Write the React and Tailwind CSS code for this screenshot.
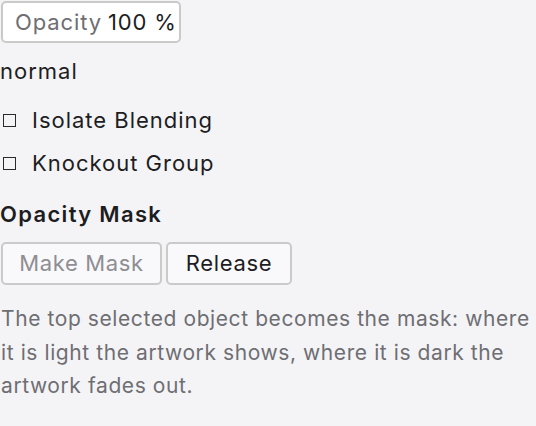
export default function App() {
  return (
    <div className="min-h-[426px] bg-[#f4f4f6] text-[#1d1d1f] font-['Inter','Noto_Sans',sans-serif] text-[22px] tracking-[0.045em]">
      <div className="flex flex-col items-start">
        {/* opacity field */}
        <div className="mt-px ml-px flex h-[42px] w-[180px] items-center whitespace-nowrap rounded-[5px] border-2 border-[#cacaca] bg-white pl-[12px] tracking-[0.04em]">
          <span className="text-[#6e6e73]">Opacity</span>
          <span className="ml-[6px]">100 %</span>
        </div>

        <div className="mt-[13px] leading-[30px]">normal</div>

        <label className="mt-[19px] flex items-center leading-[30px]">
          <span className="ml-[3px] h-[13px] w-[13px] border border-[#2a2a2a]" />
          <span className="ml-[16px]">Isolate Blending</span>
        </label>
        <label className="mt-[13px] flex items-center leading-[30px]">
          <span className="ml-[3px] h-[13px] w-[13px] border border-[#2a2a2a]" />
          <span className="ml-[16px]">Knockout Group</span>
        </label>

        <div className="mt-[21px] font-semibold leading-[30px] tracking-[0.06em]">Opacity Mask</div>

        <div className="mt-[13px] ml-px flex gap-[4px] tracking-[0.03em]">
          <button className="h-[43px] w-[161px] rounded-[5px] border-2 border-[#cacaca] bg-[#f9f9fb] text-[#8e8e93]">Make Mask</button>
          <button className="h-[43px] w-[126px] rounded-[5px] border-2 border-[#cacaca] bg-[#f9f9fb]">Release</button>
        </div>

        <p className="mt-[17px] pl-px text-[21px] leading-[33.5px] tracking-[0.028em] text-[#6e6e73]">
          The top selected object becomes the mask: where it is light the artwork shows, where it is dark the artwork fades out.
        </p>
      </div>
    </div>
  )
}
